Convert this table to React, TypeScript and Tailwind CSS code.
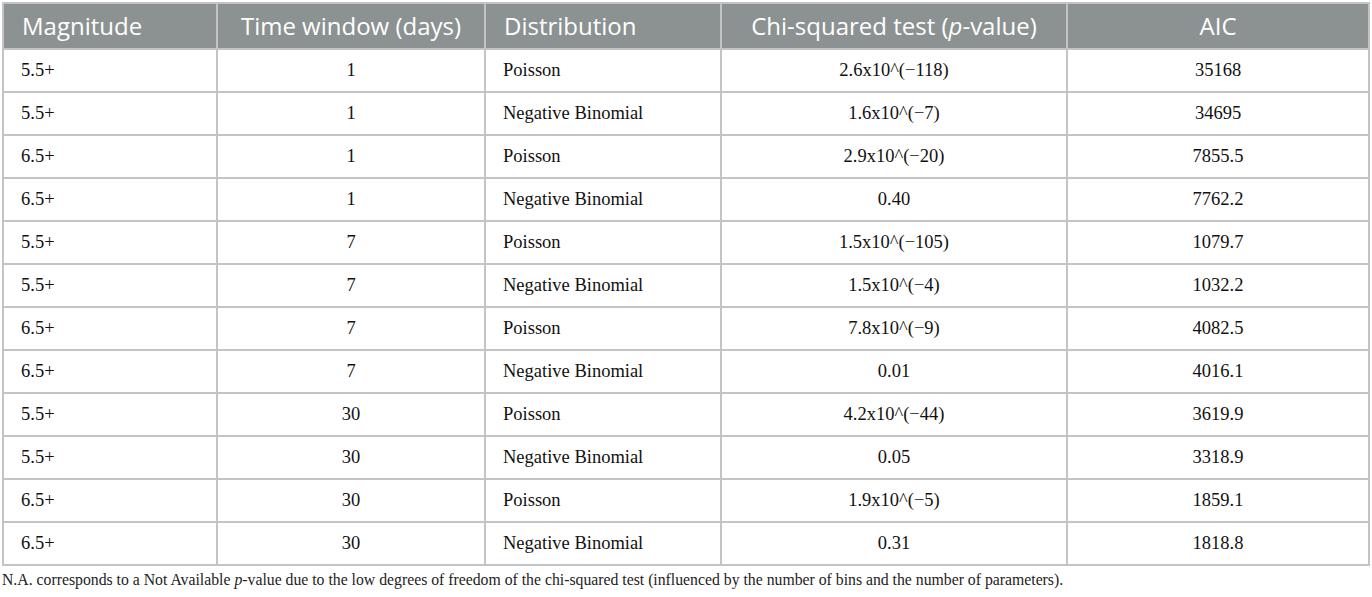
import React from "react";

const rows: [string, string, string, string, string][] = [
  ["5.5+", "1", "Poisson", "2.6x10^(\u2212118)", "35168"],
  ["5.5+", "1", "Negative Binomial", "1.6x10^(\u22127)", "34695"],
  ["6.5+", "1", "Poisson", "2.9x10^(\u221220)", "7855.5"],
  ["6.5+", "1", "Negative Binomial", "0.40", "7762.2"],
  ["5.5+", "7", "Poisson", "1.5x10^(\u2212105)", "1079.7"],
  ["5.5+", "7", "Negative Binomial", "1.5x10^(\u22124)", "1032.2"],
  ["6.5+", "7", "Poisson", "7.8x10^(\u22129)", "4082.5"],
  ["6.5+", "7", "Negative Binomial", "0.01", "4016.1"],
  ["5.5+", "30", "Poisson", "4.2x10^(\u221244)", "3619.9"],
  ["5.5+", "30", "Negative Binomial", "0.05", "3318.9"],
  ["6.5+", "30", "Poisson", "1.9x10^(\u22125)", "1859.1"],
  ["6.5+", "30", "Negative Binomial", "0.31", "1818.8"],
];

const serif = { fontFamily: '"Liberation Serif", "Times New Roman", serif' };

export default function App() {
  return (
    <div className="w-[1372px] h-[597px] bg-white pt-[2px] pl-[2px]">
      <div className="w-[1368px] grid grid-cols-[212px_266px_234px_344px_300px] gap-[2px] p-[2px] bg-[#c3c5c5]">
        <div className="h-[44px] bg-[#8c9292] text-white text-[24px] font-['Open_Sans',sans-serif] flex items-center pl-[18px] leading-none">Magnitude</div>
        <div className="h-[44px] bg-[#8c9292] text-white text-[24px] font-['Open_Sans',sans-serif] flex items-center justify-center leading-none">Time window (days)</div>
        <div className="h-[44px] bg-[#8c9292] text-white text-[24px] font-['Open_Sans',sans-serif] flex items-center pl-[18px] leading-none">Distribution</div>
        <div className="h-[44px] bg-[#8c9292] text-white text-[24px] font-['Open_Sans',sans-serif] flex items-center justify-center leading-none">
          <span>Chi-squared test (<span className="italic">p</span>-value)</span>
        </div>
        <div className="h-[44px] bg-[#8c9292] text-white text-[24px] font-['Open_Sans',sans-serif] flex items-center justify-center leading-none">AIC</div>
        {rows.map((r, i) => (
          <React.Fragment key={i}>
            <div style={serif} className="h-[41px] bg-white text-[#111] text-[18.5px] flex items-center pl-[17px]">{r[0]}</div>
            <div style={serif} className="h-[41px] bg-white text-[#111] text-[18.5px] flex items-center justify-center">{r[1]}</div>
            <div style={serif} className="h-[41px] bg-white text-[#111] text-[18.5px] flex items-center pl-[17px]">{r[2]}</div>
            <div style={serif} className="h-[41px] bg-white text-[#111] text-[18.5px] flex items-center justify-center">{r[3]}</div>
            <div style={serif} className="h-[41px] bg-white text-[#111] text-[18.5px] flex items-center justify-center">{r[4]}</div>
          </React.Fragment>
        ))}
      </div>
      <p style={serif} className="mt-[4px] text-[15.75px] text-[#222] leading-[20px]">
        N.A. corresponds to a Not Available <span className="italic">p</span>-value due to the low degrees of freedom of the chi-squared test (influenced by the number of bins and the number of parameters).
      </p>
    </div>
  );
}
